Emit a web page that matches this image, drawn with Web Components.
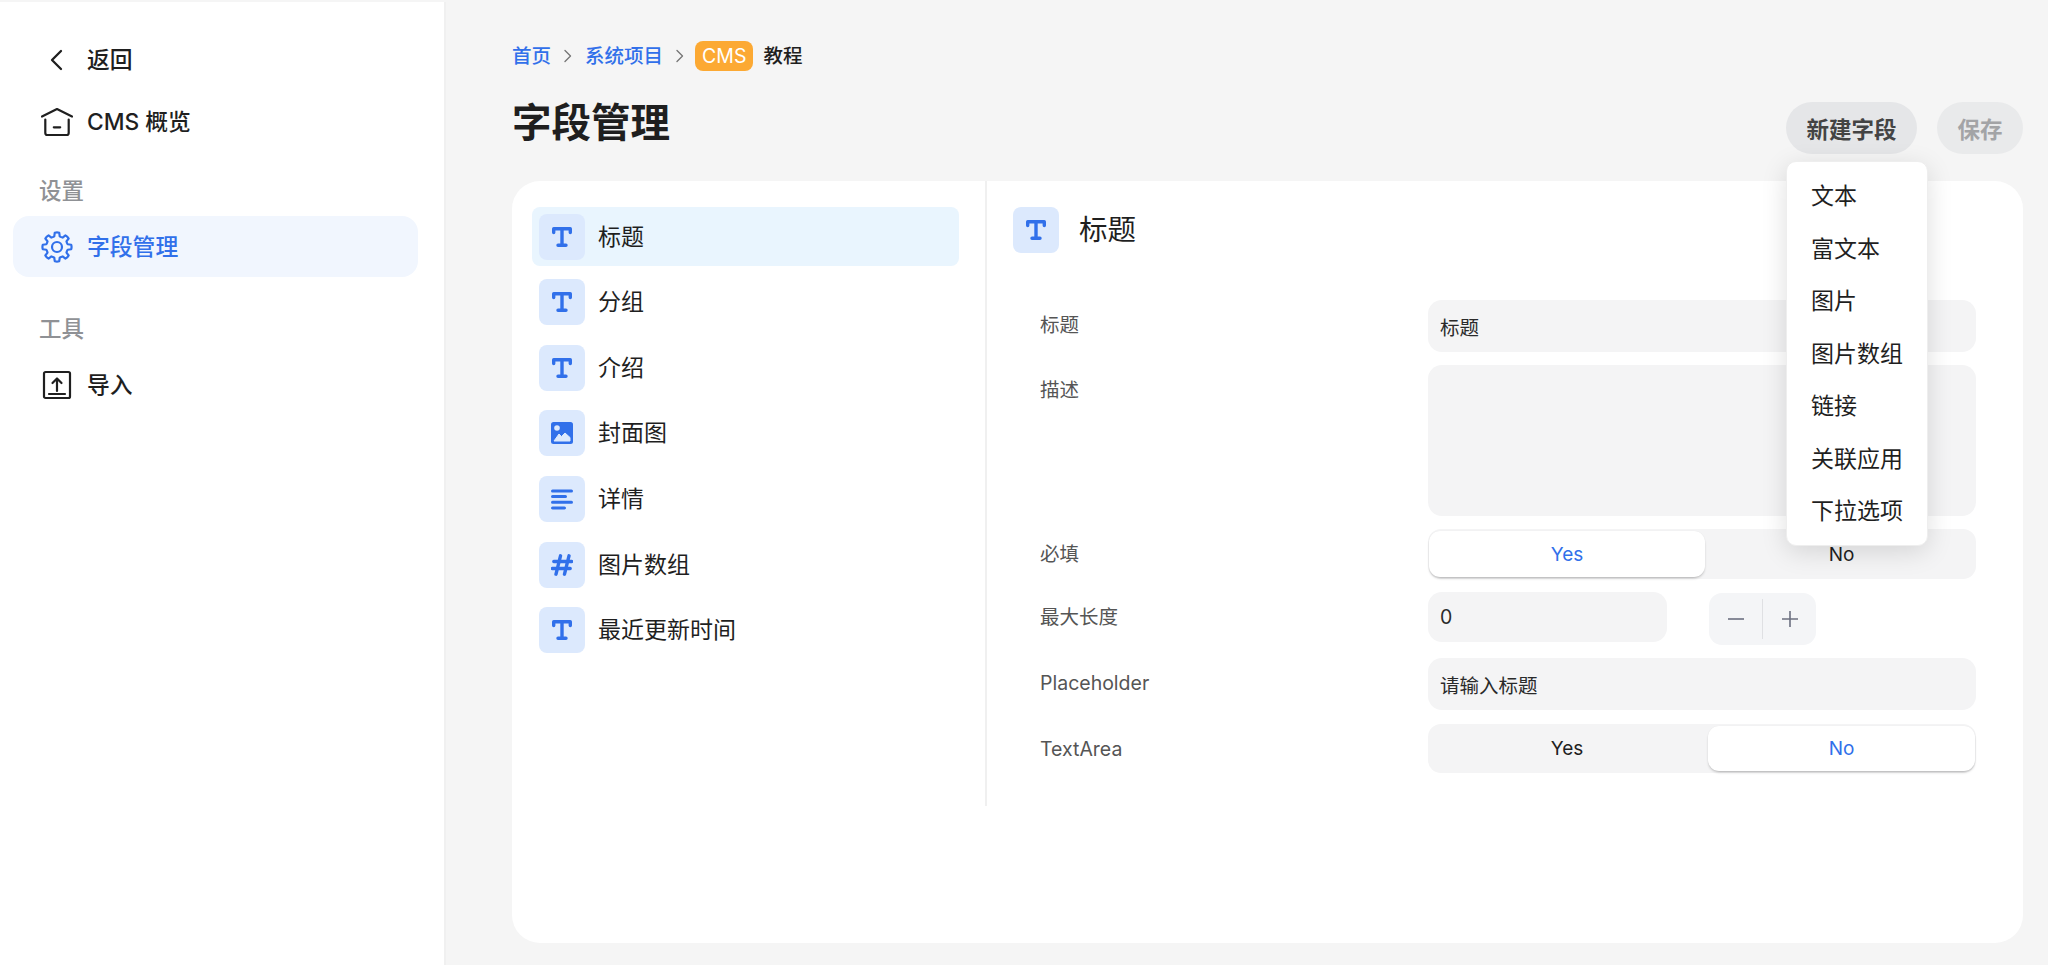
<!DOCTYPE html>
<html lang="zh"><head><meta charset="utf-8"><title>字段管理</title>
<style>
html,body{margin:0;height:100%;overflow:hidden}
body{background:#f5f5f5;font-family:Inter,"Noto Sans CJK SC",sans-serif;color:#1f1f1f}
cms-app{height:965px}
</style></head><body>
<cms-app>
  <cms-sidebar slot="side"></cms-sidebar>
  <cms-main></cms-main>
</cms-app>
<script>
const T=`<svg width="20" height="20" viewBox="0 0 20 20" fill="none" stroke="#3170ea" stroke-width="3.400" stroke-linecap="round" stroke-linejoin="round"><path d="M1.700 5.500V1.700h16.600v3.800M10 1.700v16.600M6 18.300h8"/></svg>`;
const IMG=`<svg width="22" height="22" viewBox="0 0 22 22"><rect width="22" height="22" rx="2.500" fill="#3170ea"/><circle cx="6" cy="6" r="2.800" fill="#dce9fd"/><path d="M3 19l5-7 2.500 2.500 3.500-3.500 5 4.500V19z" fill="#dce9fd" stroke="#dce9fd" stroke-linejoin="round"/></svg>`;
const LINES=`<svg width="22" height="21" viewBox="0 0 22 21" fill="none" stroke="#3170ea" stroke-width="3" stroke-linecap="round"><path d="M1.500 2h19M1.500 7.600h13M1.500 13.200h19M1.500 18.900h12"/></svg>`;
const HASH=`<svg width="22" height="22" viewBox="0 0 22 22" fill="none" stroke="#3170ea" stroke-width="3.400" stroke-linecap="round"><path d="M9.500 1.800L5 20.200M18 1.800L13.500 20.200M2.800 7.500h18M1.200 14.500h18"/></svg>`;
const ICONS={t:T,img:IMG,lines:LINES,hash:HASH};
function gearPath(c,ro,ri,n){
  let d='';const P=(r,a)=>{const t=(a-90)*Math.PI/180;return (c+r*Math.cos(t)).toFixed(2)+' '+(c+r*Math.sin(t)).toFixed(2)};
  const s=360/n;
  for(let i=0;i<n;i++){const a=i*s;
    d+=(i?'L':'M')+P(ri,a-s*.32)+'L'+P(ro,a-s*.2)+'Q'+P(ro+.5,a)+' '+P(ro,a+s*.2)+'L'+P(ri,a+s*.32)+'Q'+P(ri-.4,a+s*.5)+' '+P(ri,a+s*.68);
  }
  return d+'Z';
}
function def(name,css,html){
  customElements.define(name,class extends HTMLElement{
    constructor(){super();const r=this.attachShadow({mode:'open'});
      r.innerHTML=`<style>${css}</style>`+(typeof html==='function'?html(this):html);}
  });
}
def('cms-app',`:host{display:flex;width:2048px;box-sizing:border-box;padding-top:2px}`,`<slot name="side"></slot><slot></slot>`);

def('nav-item',`
:host{display:flex;align-items:center;gap:13px;height:61px;margin:0 26px 0 13px;padding-left:26px;box-sizing:border-box;border-radius:16px;font-size:22.800px;line-height:30px;font-weight:500;color:#1f1f1f}
:host([active]){background:#f1f6fe;color:#3170ea}
.i{width:35px;height:35px;display:flex;align-items:center;justify-content:center}
`,`<span class="i"><slot name="icon"></slot></span><slot></slot>`);

def('nav-label',`:host{display:block;margin-left:39px;font-size:22.500px;line-height:30px;font-weight:500;color:#8f9195}`,`<slot></slot>`);

def('cms-sidebar',`
:host{display:block;flex:none;width:446px;box-sizing:border-box;height:963px;background:#fff;border-right:2px solid #f0f0f0;padding-top:27px}
svg{display:block}
`,`
<nav-item><svg slot="icon" width="16" height="22" viewBox="0 0 16 22" fill="none" stroke="#1f1f1f" stroke-width="2.300" stroke-linecap="round" stroke-linejoin="round"><path d="M12 2L3 11l9 9"/></svg>返回</nav-item>
<nav-item style="margin-top:1px"><svg slot="icon" width="32" height="30" viewBox="0 0 32 30" fill="none" stroke="#1f1f1f" stroke-width="2.200" stroke-linecap="round" stroke-linejoin="round"><path d="M1 9.500L16 2l15 7.500M4.300 12.500v13.500a2 2 0 002 2h19.400a2 2 0 002-2V12.500M12.800 20.300h6.400"/></svg>CMS 概览</nav-item>
<nav-label style="margin-top:24px">设置</nav-label>
<nav-item active style="margin-top:10px"><svg slot="icon" width="32" height="32" viewBox="0 0 32 32" fill="none" stroke="#3170ea" stroke-width="2.200" stroke-linecap="round" stroke-linejoin="round"><circle cx="16" cy="16" r="5"/><path d="${gearPath(16,14.4,11,8)}"/></svg>字段管理</nav-item>
<nav-label style="margin-top:37px">工具</nav-label>
<nav-item style="margin-top:10px"><svg slot="icon" width="30" height="30" viewBox="0 0 30 30" fill="none" stroke="#1f1f1f" stroke-width="2.200" stroke-linecap="round" stroke-linejoin="round"><rect x="2" y="2" width="26" height="26" rx="1.500"/><path d="M15 21V8.500M10.500 13L15 8.500l4.500 4.500M7 24h16"/></svg>导入</nav-item>
`);

def('bread-crumbs',`
:host{display:flex;align-items:center;height:30px;font-size:19.500px;line-height:30px;font-weight:500;color:#1f1f1f}
.a{color:#3170ea}
svg{margin:0 13px;display:block}
.tag{background:#fca933;color:#fff;border-radius:8px;padding:0 7px;margin:0 10px 0 -2px;font-weight:400}
`,`<span class="a">首页</span><svg width="8" height="14" viewBox="0 0 8 14" fill="none" stroke="#777" stroke-width="1.400" stroke-linecap="round" stroke-linejoin="round"><path d="M1 1.500L6.500 7 1 12.500"/></svg><span class="a">系统项目</span><svg width="8" height="14" viewBox="0 0 8 14" fill="none" stroke="#777" stroke-width="1.400" stroke-linecap="round" stroke-linejoin="round"><path d="M1 1.500L6.500 7 1 12.500"/></svg><span class="tag">CMS</span><span>教程</span>`);

def('pill-button',`
:host{display:flex;align-items:center;justify-content:center;height:52px;padding:0 20.500px;border-radius:26px;background:#e5e6e8;font-size:22.500px;font-weight:600;color:#444;box-sizing:border-box}
:host([disabled]){background:#e9eaeb;color:#a3a4a6}
`,`<slot></slot>`);

def('drop-menu',`
:host{position:absolute;top:-1px;left:0;width:142px;box-sizing:border-box;background:#fff;border-radius:10px;border:1px solid #eee;box-shadow:0 6px 26px rgba(0,0,0,.13);padding:8px 0 7px;z-index:5}
.m{display:block;height:52.500px;line-height:52.500px;padding-left:24px;font-size:23px;color:#1f1f1f}
`,`<span class="m">文本</span><span class="m">富文本</span><span class="m">图片</span><span class="m">图片数组</span><span class="m">链接</span><span class="m">关联应用</span><span class="m">下拉选项</span>`);

def('type-icon',`
:host{display:flex;align-items:center;justify-content:center;flex:none;width:46px;height:46px;border-radius:8px;background:#dce9fd}
svg{display:block}
`,h=>ICONS[h.getAttribute('kind')]);

def('field-row',`
:host{display:flex;align-items:center;gap:13px;height:59px;box-sizing:border-box;padding-left:7px;margin-bottom:6.670px;border-radius:8px;font-size:23px;line-height:30px;color:#1f1f1f}
:host([active]){background:#e9f5fe}
`,h=>`<type-icon kind="${h.getAttribute('kind')}"></type-icon><slot></slot>`);

def('form-row',`
:host{display:grid;grid-template-columns:388px 548px;align-items:start;margin-bottom:13px}
.l{line-height:50px;color:#555;font-size:19.500px}
`,h=>`<div class="l">${h.getAttribute('label')}</div><div><slot></slot></div>`);

def('text-input',`
:host{display:flex;align-items:center;height:var(--h,52px);box-sizing:border-box;padding:0 12px;background:#f4f4f5;border-radius:14px;font-size:19.500px;color:#2a2a2a;width:var(--w,auto)}
`,`<slot></slot>`);

def('seg-toggle',`
:host{display:grid;grid-template-columns:279px 1fr;height:var(--h,50px);background:#f4f4f5;border-radius:13px;box-sizing:border-box;padding:2px 1px;font-size:19px;color:#1f1f1f}
span{display:flex;align-items:center;justify-content:center;border-radius:11px}
span:nth-of-type(1){margin-right:3px}
.on{background:#fff;color:#3170ea;box-shadow:0 2px 3px -1px rgba(0,0,0,.3),0 0 1px rgba(0,0,0,.08)}
`,h=>{const v=h.getAttribute('value');return `<span class="${v==='Yes'?'on':''}">Yes</span><span class="${v==='No'?'on':''}">No</span>`});

def('num-stepper',`
:host{display:flex;gap:42px;align-items:flex-start}
.s{display:flex;align-items:center;width:107px;height:52px;background:#f4f5f7;border-radius:13px;margin-top:1px}
.s>div{flex:1;display:flex;align-items:center;justify-content:center;height:100%}
.d{flex:none!important;width:1px;height:40px!important;background:#dfe0e3}
`,`<text-input style="--w:239px;--h:50px">0</text-input><div class="s"><div><svg width="16" height="16" viewBox="0 0 16 16" stroke="#6c7080" stroke-width="1.600"><path d="M0 8h16"/></svg></div><div class="d"></div><div><svg width="16" height="16" viewBox="0 0 16 16" stroke="#6c7080" stroke-width="1.600"><path d="M0 8h16M8 0v16"/></svg></div></div>`);

def('field-detail',`
:host{display:block;flex:1;padding:26px 0 0 26px}
.h{display:flex;align-items:center;gap:20px;height:46px;font-size:28.500px;line-height:46px;color:#1f1f1f}
.f{margin-top:47px;padding-left:27px}
`,`<div class="h"><type-icon kind="t"></type-icon><span>标题</span></div>
<div class="f">
<form-row label="标题"><text-input>标题</text-input></form-row>
<form-row label="描述"><text-input style="--h:151px"></text-input></form-row>
<form-row label="必填"><seg-toggle value="Yes"></seg-toggle></form-row>
<form-row label="最大长度"><num-stepper></num-stepper></form-row>
<form-row label="Placeholder" style="margin-bottom:14px"><text-input>请输入标题</text-input></form-row>
<form-row label="TextArea"><seg-toggle value="No" style="--h:49px"></seg-toggle></form-row>
</div>`);

def('content-card',`
:host{display:flex;align-items:flex-start;width:1511px;height:762px;background:#fff;border-radius:28px}
.list{flex:none;width:475px;height:625px;box-sizing:border-box;padding:26px 26px 0 20px;border-right:2px solid #f0f0f0}
`,`<div class="list">
<field-row active kind="t">标题</field-row>
<field-row kind="t">分组</field-row>
<field-row kind="t">介绍</field-row>
<field-row kind="img">封面图</field-row>
<field-row kind="lines">详情</field-row>
<field-row kind="hash">图片数组</field-row>
<field-row kind="t">最近更新时间</field-row>
</div><field-detail></field-detail>`);

def('cms-main',`
:host{display:block;flex:1;padding:39px 25px 0 66px;min-width:0}
.top{display:flex;align-items:flex-start;justify-content:space-between;margin-top:30px;height:80px}
h1{margin:0;font-size:39.500px;line-height:54px;font-weight:600;color:#1f1f1f;margin-top:-5px}
.btns{display:flex;gap:20px;margin-top:1px}
`,`<bread-crumbs></bread-crumbs>
<div class="top"><h1>字段管理</h1>
<div class="btns"><div><pill-button>新建字段</pill-button><div style="position:relative;top:8px"><drop-menu></drop-menu></div></div><pill-button disabled>保存</pill-button></div></div>
<content-card></content-card>`);
</script>
</body></html>
